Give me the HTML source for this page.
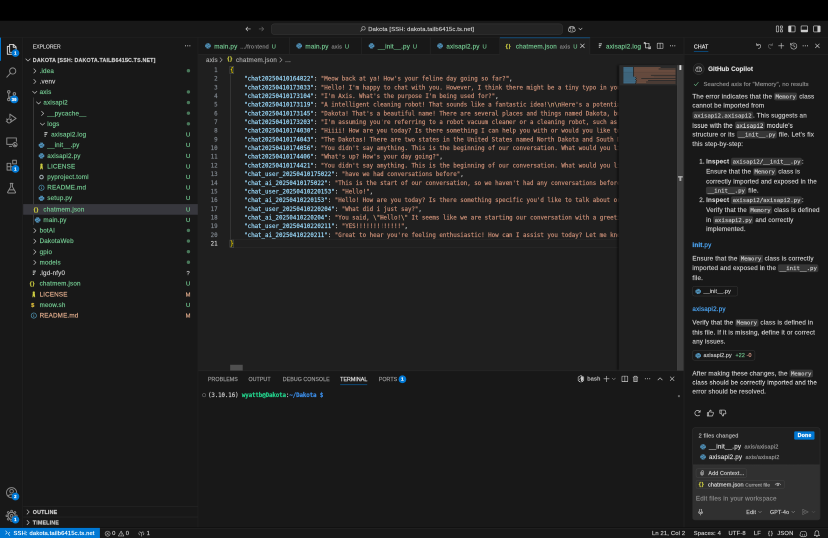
<!DOCTYPE html><html><head><meta charset="utf-8"><title>Dakota</title><style>
html,body{margin:0;padding:0;background:#000;width:828px;height:538px;overflow:hidden}
#wrap{position:absolute;left:0;top:0;width:1656px;height:1076px;transform:scale(0.5);transform-origin:0 0;will-change:transform;overflow:hidden;background:#000}
#app{position:absolute;left:0;top:0;width:1716px;height:1115px;transform:scale(0.96504);transform-origin:0 0;font-family:"Liberation Sans",sans-serif;font-size:13px;color:#ccc;background:#000;overflow:hidden;-webkit-text-stroke:0.35px;letter-spacing:.35px}
#app *{box-sizing:border-box}
.abs{position:absolute}
svg{display:block;overflow:visible}
.mono{font-family:"DejaVu Sans Mono","Liberation Mono",monospace;letter-spacing:0}
/* title */
#title{left:0;top:43px;width:1716px;height:35px;background:#181818;border-bottom:1px solid #2b2b2b}
#cc{left:562px;top:6px;width:604px;height:23px;background:#242424;border:1px solid #3a3a3a;border-radius:6px;color:#ccc;font-size:12px;line-height:21px;text-align:center}
/* activity */
#act{left:0;top:78px;width:48px;height:1015px;background:#181818;border-right:1px solid #2b2b2b}
.ai{position:absolute;left:10px;width:28px;height:28px;margin-top:-2px}
.badge{position:absolute;background:#0078d4;color:#fff;border-radius:8px;height:16px;min-width:16px;font-size:9px;line-height:16px;text-align:center;font-weight:bold;padding:0 3px}
/* sidebar */
#side{left:48px;top:78px;width:363px;height:1015px;background:#181818;border-right:1px solid #2b2b2b}
.row{position:absolute;left:0;width:362px;height:22px;line-height:22px;white-space:nowrap}
.row .lbl{position:absolute;top:0}
.row .bd{position:absolute;left:332px;width:20px;text-align:center;top:0;font-size:12px}
.g{color:#73c991}.m{color:#e2ad8d}
.dot{position:absolute;left:338.5px;top:7.5px;width:7px;height:7px;border-radius:50%;background:#73c991;opacity:.55}
.tw{position:absolute;top:3px;width:16px;height:16px}
.fi{position:absolute;top:3px;width:16px;height:16px}
/* tabs */
#tabs{left:411px;top:78px;width:1006px;height:35px;background:#181818;border-bottom:1px solid #2b2b2b}
.tab{position:absolute;top:0;height:35px;border-right:1px solid #2b2b2b;line-height:35px;white-space:nowrap}
.tab .d{color:#8b8b8b;font-size:11.5px}
/* editor */
#ed{left:411px;top:113px;width:1006px;height:655px;background:#1f1f1f}
#bc{left:0;top:0;width:1006px;height:22px;line-height:22px;color:#a9a9a9;white-space:nowrap}
#code{left:0;top:23px;width:871px;height:620px;overflow:hidden;font-size:12px;line-height:18px;white-space:pre}
.ln{position:absolute;left:0;width:40px;text-align:right;color:#6e7681;height:18px}
.cl{position:absolute;left:66px;height:18px;color:#ccc}
.k{color:#9cdcfe}.s{color:#ce9178}.e{color:#d2a07c}.y{color:#ffd700}
/* panel */
#panel{left:411px;top:768px;width:1006px;height:325px;background:#181818;border-top:1px solid #2b2b2b}
.pt{position:absolute;top:7px;height:20px;line-height:20px;font-size:11px;color:#9d9d9d;letter-spacing:.1px}
/* chat */
#chat{left:1417px;top:78px;width:299px;height:1015px;background:#181818;border-left:1px solid #2b2b2b}
.cp{position:absolute;left:17px;width:270px;line-height:19.7px;color:#ccc;white-space:nowrap}
code{font-family:"DejaVu Sans Mono","Liberation Mono",monospace;letter-spacing:0;font-size:11.7px;background:#373737;border-radius:4px;padding:1px 3px;color:#ccc}
/* status */
#status{left:0;top:1094px;width:1716px;height:21px;background:#181818;border-top:1px solid #2b2b2b;font-size:12px;line-height:21px;color:#ccc;white-space:nowrap}
.si{position:absolute;top:0;height:22px}
</style></head><body><div id="wrap"><div id="app">
<div id="title" class="abs">
<div class="abs" style="left:506px;top:9px;color:#ccc"><svg width="16" height="16" viewBox="0 0 16 16" ><path d="M13 8 H3.5 M7.5 4 L3.5 8 L7.5 12" fill="none" stroke="currentColor" stroke-width="1.25" stroke-linecap="round" stroke-linejoin="round" stroke-width="1.45"/></svg></div>
<div class="abs" style="left:534px;top:9px;color:#6b6b6b"><svg width="16" height="16" viewBox="0 0 16 16" ><path d="M3 8 H12.5 M8.5 4 L12.5 8 L8.5 12" fill="none" stroke="currentColor" stroke-width="1.25" stroke-linecap="round" stroke-linejoin="round" stroke-width="1.45"/></svg></div>
<div id="cc" class="abs"><span style="display:inline-block;vertical-align:top;margin-right:4px;margin-top:3px;color:#ccc"><svg width="14" height="14" viewBox="0 0 16 16" ><circle cx="9.5" cy="6.5" r="4" fill="none" stroke="currentColor" stroke-width="1.25" stroke-linecap="round" stroke-linejoin="round" stroke-width="1.45"/><path d="M6.5 9.5 L2.5 13.5" fill="none" stroke="currentColor" stroke-width="1.25" stroke-linecap="round" stroke-linejoin="round" stroke-width="1.45"/></svg></span>Dakota [SSH: dakota.tailb6415c.ts.net]</div>
<div class="abs" style="left:1176px;top:9px;color:#ccc"><svg width="18" height="16" viewBox="0 0 18 16" ><path d="M3 7 C3 3.5 6 3 9 3 C12 3 15 3.5 15 7 L16 9.5 V12 C14 13.8 11.5 14.5 9 14.5 C6.5 14.5 4 13.8 2 12 V9.5 Z" fill="none" stroke="currentColor" stroke-width="1.25" stroke-linecap="round" stroke-linejoin="round" stroke-width="1.5"/><path d="M7 9.5 V11.5 M11 9.5 V11.5" fill="none" stroke="currentColor" stroke-width="1.25" stroke-linecap="round" stroke-linejoin="round" stroke-width="1.5"/><path d="M4.5 4.5 H8 V7.5 H4.5 Z M10 4.5 H13.5 V7.5 H10 Z" fill="currentColor" opacity=".8"/></svg></div>
<div class="abs" style="left:1196px;top:10px;color:#ccc"><svg width="14" height="14" viewBox="0 0 16 16" ><path d="M4 6 L8 10 L12 6" fill="none" stroke="currentColor" stroke-width="1.25" stroke-linecap="round" stroke-linejoin="round" stroke-width="1.5"/></svg></div>
<div class="abs" style="left:1606px;top:8px;color:#ccc"><svg width="18" height="18" viewBox="0 0 16 16" ><rect x="2.5" y="2.5" width="4.5" height="11" rx="1" fill="none" stroke="currentColor" stroke-width="1.25" stroke-linecap="round" stroke-linejoin="round"/><rect x="10" y="2.5" width="4" height="4" rx=".8" fill="none" stroke="currentColor" stroke-width="1.25" stroke-linecap="round" stroke-linejoin="round"/><rect x="10" y="9.5" width="4" height="4" rx=".8" fill="none" stroke="currentColor" stroke-width="1.25" stroke-linecap="round" stroke-linejoin="round"/></svg></div>
<div class="abs" style="left:1632px;top:8px;color:#ccc"><svg width="18" height="18" viewBox="0 0 16 16" ><rect x="2" y="2.5" width="12" height="11" rx="1" fill="none" stroke="currentColor" stroke-width="1.25" stroke-linecap="round" stroke-linejoin="round" stroke-width="1.35"/><rect x="2" y="2.5" width="5" height="11" fill="currentColor"/></svg></div>
<div class="abs" style="left:1658px;top:8px;color:#ccc"><svg width="18" height="18" viewBox="0 0 16 16" ><rect x="2" y="2.5" width="12" height="11" rx="1" fill="none" stroke="currentColor" stroke-width="1.25" stroke-linecap="round" stroke-linejoin="round" stroke-width="1.35"/><rect x="2" y="9.5" width="12" height="4" fill="currentColor"/></svg></div>
<div class="abs" style="left:1684px;top:8px;color:#ccc"><svg width="18" height="18" viewBox="0 0 16 16" ><rect x="2" y="2.5" width="12" height="11" rx="1" fill="none" stroke="currentColor" stroke-width="1.25" stroke-linecap="round" stroke-linejoin="round" stroke-width="1.35"/><rect x="9" y="2.5" width="5" height="11" fill="currentColor"/></svg></div>
</div>
<div id="act" class="abs">
<div class="abs" style="left:0;top:0;width:2px;height:48px;background:#0078d4"></div>
<div class="ai" style="top:12px;color:#d7d7d7"><svg width="28" height="28" viewBox="0 0 24 24" ><path d="M8.5 3.5 H15.5 L20 8 V17.5 H8.5 Z M15 3.5 V8.5 H20" fill="none" stroke="currentColor" stroke-width="1.7" stroke-linecap="round" stroke-linejoin="round"/><path d="M8.5 7 H4.5 V21 H15 V17.5" fill="none" stroke="currentColor" stroke-width="1.7" stroke-linecap="round" stroke-linejoin="round"/></svg></div>
<div class="ai" style="top:60px;color:#8c8c8c"><svg width="28" height="28" viewBox="0 0 24 24" ><circle cx="14" cy="9.5" r="5.5" fill="none" stroke="currentColor" stroke-width="1.7" stroke-linecap="round" stroke-linejoin="round"/><path d="M10 13.5 L3.5 20.5" fill="none" stroke="currentColor" stroke-width="1.7" stroke-linecap="round" stroke-linejoin="round"/></svg></div>
<div class="ai" style="top:108px;color:#8c8c8c"><svg width="28" height="28" viewBox="0 0 24 24" ><circle cx="7" cy="5.5" r="2.2" fill="none" stroke="currentColor" stroke-width="1.7" stroke-linecap="round" stroke-linejoin="round"/><circle cx="7" cy="19" r="2.2" fill="none" stroke="currentColor" stroke-width="1.7" stroke-linecap="round" stroke-linejoin="round"/><circle cx="17" cy="9" r="2.2" fill="none" stroke="currentColor" stroke-width="1.7" stroke-linecap="round" stroke-linejoin="round"/><path d="M7 7.7 V16.8 M17 11.2 C17 14.5 7 13 7 16.8" fill="none" stroke="currentColor" stroke-width="1.7" stroke-linecap="round" stroke-linejoin="round"/></svg></div>
<div class="ai" style="top:156px;color:#8c8c8c"><svg width="28" height="28" viewBox="0 0 24 24" ><path d="M9 4 L20 11.5 L10.5 18" fill="none" stroke="currentColor" stroke-width="1.7" stroke-linecap="round" stroke-linejoin="round"/><path d="M9 4 V10" fill="none" stroke="currentColor" stroke-width="1.7" stroke-linecap="round" stroke-linejoin="round"/><circle cx="7.5" cy="16" r="3.6" fill="none" stroke="currentColor" stroke-width="1.7" stroke-linecap="round" stroke-linejoin="round"/><path d="M3 12.5 L5 13.8 M12 12.5 L10 13.8 M2.5 16.5 H4 M11 16.5 H12.5" fill="none" stroke="currentColor" stroke-width="1.7" stroke-linecap="round" stroke-linejoin="round" stroke-width="1.45"/></svg></div>
<div class="ai" style="top:204px;color:#8c8c8c"><svg width="28" height="28" viewBox="0 0 24 24" ><path d="M13 16.5 H3.5 V5 H20.5 V11" fill="none" stroke="currentColor" stroke-width="1.7" stroke-linecap="round" stroke-linejoin="round"/><path d="M8 20 H12" fill="none" stroke="currentColor" stroke-width="1.7" stroke-linecap="round" stroke-linejoin="round"/><circle cx="18" cy="17" r="3.8" fill="none" stroke="currentColor" stroke-width="1.7" stroke-linecap="round" stroke-linejoin="round"/><path d="M16.5 15.5 L18 17 L16.5 18.5 M18.5 18.5 H19.8" fill="none" stroke="currentColor" stroke-width="1.7" stroke-linecap="round" stroke-linejoin="round" stroke-width="1.35"/></svg></div>
<div class="ai" style="top:252px;color:#8c8c8c"><svg width="28" height="28" viewBox="0 0 24 24" ><path d="M4 9 H10.5 V21 H4 Z M10.5 15 H17 V21 H10.5 M4 15 H10.5" fill="none" stroke="currentColor" stroke-width="1.7" stroke-linecap="round" stroke-linejoin="round"/><path d="M14 3.5 H20.5 V10 H14 Z" fill="none" stroke="currentColor" stroke-width="1.7" stroke-linecap="round" stroke-linejoin="round"/></svg></div>
<div class="ai" style="top:300px;color:#8c8c8c"><svg width="28" height="28" viewBox="0 0 24 24" ><path d="M9.5 3.5 H14.5 M10.5 3.5 V9.5 L5 19 C4.6 20 5 20.5 6 20.5 H18 C19 20.5 19.4 20 19 19 L13.5 9.5 V3.5 M7.5 15 H16.5" fill="none" stroke="currentColor" stroke-width="1.7" stroke-linecap="round" stroke-linejoin="round"/></svg></div>
<div class="ai" style="top:931px;color:#868686"><svg width="28" height="28" viewBox="0 0 24 24" ><circle cx="12" cy="12" r="9" fill="none" stroke="currentColor" stroke-width="1.7" stroke-linecap="round" stroke-linejoin="round"/><circle cx="12" cy="9.5" r="3.2" fill="none" stroke="currentColor" stroke-width="1.7" stroke-linecap="round" stroke-linejoin="round"/><path d="M5.8 18.5 C7 14.5 17 14.5 18.2 18.5" fill="none" stroke="currentColor" stroke-width="1.7" stroke-linecap="round" stroke-linejoin="round"/></svg></div>
<div class="ai" style="top:979px;color:#868686"><svg width="28" height="28" viewBox="0 0 24 24" ><circle cx="12" cy="12" r="6.4" fill="none" stroke="currentColor" stroke-width="1.7" stroke-linecap="round" stroke-linejoin="round"/><circle cx="12" cy="12" r="2.4" fill="none" stroke="currentColor" stroke-width="1.7" stroke-linecap="round" stroke-linejoin="round"/><rect x="10.6" y="2.2" width="2.8" height="4" rx=".6" transform="rotate(0 12 12)" fill="none" stroke="currentColor" stroke-width="1.5"/><rect x="10.6" y="2.2" width="2.8" height="4" rx=".6" transform="rotate(45 12 12)" fill="none" stroke="currentColor" stroke-width="1.5"/><rect x="10.6" y="2.2" width="2.8" height="4" rx=".6" transform="rotate(90 12 12)" fill="none" stroke="currentColor" stroke-width="1.5"/><rect x="10.6" y="2.2" width="2.8" height="4" rx=".6" transform="rotate(135 12 12)" fill="none" stroke="currentColor" stroke-width="1.5"/><rect x="10.6" y="2.2" width="2.8" height="4" rx=".6" transform="rotate(180 12 12)" fill="none" stroke="currentColor" stroke-width="1.5"/><rect x="10.6" y="2.2" width="2.8" height="4" rx=".6" transform="rotate(225 12 12)" fill="none" stroke="currentColor" stroke-width="1.5"/><rect x="10.6" y="2.2" width="2.8" height="4" rx=".6" transform="rotate(270 12 12)" fill="none" stroke="currentColor" stroke-width="1.5"/><rect x="10.6" y="2.2" width="2.8" height="4" rx=".6" transform="rotate(315 12 12)" fill="none" stroke="currentColor" stroke-width="1.5"/></svg></div>
<div class="badge" style="left:24px;top:24px">1</div>
<div class="badge" style="left:21px;top:120px">39</div>
<div class="badge" style="left:24px;top:264px">1</div>
<div class="badge" style="left:24px;top:943px">2</div>
<div class="badge" style="left:24px;top:991px">1</div>
</div>
<div id="side" class="abs">
<div class="abs" style="left:20px;top:0;height:35px;line-height:37px;font-size:10.6px;color:#ccc;letter-spacing:0">EXPLORER</div>
<div class="abs" style="left:333px;top:9px;color:#ccc"><svg width="16" height="16" viewBox="0 0 16 16" ><circle cx="3.5" cy="8" r="1.1" fill="currentColor"/><circle cx="8" cy="8" r="1.1" fill="currentColor"/><circle cx="12.5" cy="8" r="1.1" fill="currentColor"/></svg></div>
<div class="row" style="top:35px;font-weight:bold;font-size:11px;color:#ccc"><span class="tw" style="left:2px;color:#ccc"><svg width="16" height="16" viewBox="0 0 16 16" ><path d="M3.5 6 L8 10.5 L12.5 6" fill="none" stroke="currentColor" stroke-width="1.25" stroke-linecap="round" stroke-linejoin="round" stroke-width="1.45"/></svg></span><span class="lbl" style="left:20px">DAKOTA [SSH: DAKOTA.TAILB6415C.TS.NET]</span></div>
<div class="abs" style="left:21px;top:123.5px;width:1px;height:264px;background:#585858"></div>
<div class="row g" style="top:57.5px;"><span class="tw" style="left:16px;color:#c5c5c5"><svg width="16" height="16" viewBox="0 0 16 16" ><path d="M6 3.5 L10.5 8 L6 12.5" fill="none" stroke="currentColor" stroke-width="1.25" stroke-linecap="round" stroke-linejoin="round" stroke-width="1.45"/></svg></span><span class="lbl" style="left:34px">.idea</span><span class="dot"></span></div>
<div class="row " style="top:79.58px;"><span class="tw" style="left:16px;color:#c5c5c5"><svg width="16" height="16" viewBox="0 0 16 16" ><path d="M6 3.5 L10.5 8 L6 12.5" fill="none" stroke="currentColor" stroke-width="1.25" stroke-linecap="round" stroke-linejoin="round" stroke-width="1.45"/></svg></span><span class="lbl" style="left:34px">.venv</span></div>
<div class="row g" style="top:101.66px;"><span class="tw" style="left:16px;color:#c5c5c5"><svg width="16" height="16" viewBox="0 0 16 16" ><path d="M3.5 6 L8 10.5 L12.5 6" fill="none" stroke="currentColor" stroke-width="1.25" stroke-linecap="round" stroke-linejoin="round" stroke-width="1.45"/></svg></span><span class="lbl" style="left:34px">axis</span><span class="dot"></span></div>
<div class="row g" style="top:123.74px;"><span class="tw" style="left:24px;color:#c5c5c5"><svg width="16" height="16" viewBox="0 0 16 16" ><path d="M3.5 6 L8 10.5 L12.5 6" fill="none" stroke="currentColor" stroke-width="1.25" stroke-linecap="round" stroke-linejoin="round" stroke-width="1.45"/></svg></span><span class="lbl" style="left:42px">axisapi2</span><span class="dot"></span></div>
<div class="row g" style="top:145.82px;"><span class="tw" style="left:32px;color:#c5c5c5"><svg width="16" height="16" viewBox="0 0 16 16" ><path d="M6 3.5 L10.5 8 L6 12.5" fill="none" stroke="currentColor" stroke-width="1.25" stroke-linecap="round" stroke-linejoin="round" stroke-width="1.45"/></svg></span><span class="lbl" style="left:50px">__pycache__</span><span class="dot"></span></div>
<div class="row g" style="top:167.9px;"><span class="tw" style="left:32px;color:#c5c5c5"><svg width="16" height="16" viewBox="0 0 16 16" ><path d="M3.5 6 L8 10.5 L12.5 6" fill="none" stroke="currentColor" stroke-width="1.25" stroke-linecap="round" stroke-linejoin="round" stroke-width="1.45"/></svg></span><span class="lbl" style="left:50px">logs</span><span class="dot"></span></div>
<div class="row g" style="top:189.98px;"><span class="fi" style="left:37.5px"><svg width="16" height="16" viewBox="0 0 16 16" ><path d="M6 4 H12.5 M6 7.5 H11 M6 11 H9" stroke="#c5c8c6" stroke-width="2.1"/></svg></span><span class="lbl" style="left:58px">axisapi2.log</span><span class="bd">U</span></div>
<div class="row g" style="top:212.06px;"><span class="fi" style="left:29.5px"><svg width="16" height="16" viewBox="0 0 16 16" ><path d="M6 2.6 h4 a1.2 1.2 0 0 1 1.2 1.2 v1.4 h1.4 a1.2 1.2 0 0 1 1.2 1.2 v3.2 a1.2 1.2 0 0 1 -1.2 1.2 h-1.4 v1.4 a1.2 1.2 0 0 1 -1.2 1.2 h-4 a1.2 1.2 0 0 1 -1.2 -1.2 v-1.4 h-1.4 a1.2 1.2 0 0 1 -1.2 -1.2 v-3.2 a1.2 1.2 0 0 1 1.2 -1.2 h1.4 v-1.4 a1.2 1.2 0 0 1 1.2 -1.2 z" fill="#4f8fb6"/><circle cx="6.6" cy="4.4" r=".7" fill="#181818"/><circle cx="9.4" cy="11.6" r=".7" fill="#181818"/><path d="M4.8 8.6 H8.2 Q9 8.6 9 7.8 V7.4 H11.2" fill="none" stroke="#1c1c1c" stroke-width=".7"/></svg></span><span class="lbl" style="left:50px">__init__.py</span><span class="bd">U</span></div>
<div class="row g" style="top:234.14px;"><span class="fi" style="left:29.5px"><svg width="16" height="16" viewBox="0 0 16 16" ><path d="M6 2.6 h4 a1.2 1.2 0 0 1 1.2 1.2 v1.4 h1.4 a1.2 1.2 0 0 1 1.2 1.2 v3.2 a1.2 1.2 0 0 1 -1.2 1.2 h-1.4 v1.4 a1.2 1.2 0 0 1 -1.2 1.2 h-4 a1.2 1.2 0 0 1 -1.2 -1.2 v-1.4 h-1.4 a1.2 1.2 0 0 1 -1.2 -1.2 v-3.2 a1.2 1.2 0 0 1 1.2 -1.2 h1.4 v-1.4 a1.2 1.2 0 0 1 1.2 -1.2 z" fill="#4f8fb6"/><circle cx="6.6" cy="4.4" r=".7" fill="#181818"/><circle cx="9.4" cy="11.6" r=".7" fill="#181818"/><path d="M4.8 8.6 H8.2 Q9 8.6 9 7.8 V7.4 H11.2" fill="none" stroke="#1c1c1c" stroke-width=".7"/></svg></span><span class="lbl" style="left:50px">axisapi2.py</span><span class="bd">U</span></div>
<div class="row g" style="top:256.22px;"><span class="fi" style="left:29.5px"><svg width="16" height="16" viewBox="0 0 16 16" ><circle cx="8" cy="4.3" r="2.4" fill="#cbcb41"/><path d="M5.8 6 H10.2 L10.9 14 H9.2 L8 10.8 L6.8 14 H5.1 Z" fill="#cbcb41"/></svg></span><span class="lbl" style="left:50px">LICENSE</span><span class="bd">U</span></div>
<div class="row g" style="top:278.3px;"><span class="fi" style="left:29.5px"><svg width="16" height="16" viewBox="0 0 16 16" ><circle cx="8" cy="8" r="3.6" fill="none" stroke="#9aa5aa" stroke-width="2.4"/></svg></span><span class="lbl" style="left:50px">pyproject.toml</span><span class="bd">U</span></div>
<div class="row g" style="top:300.38px;"><span class="fi" style="left:29.5px"><svg width="16" height="16" viewBox="0 0 16 16" ><circle cx="8" cy="8" r="5.4" fill="none" stroke="#519aba" stroke-width="1.35"/><path d="M8 7.2 V11" stroke="#519aba" stroke-width="1.5"/><circle cx="8" cy="5.2" r=".8" fill="#519aba"/></svg></span><span class="lbl" style="left:50px">README.md</span><span class="bd">U</span></div>
<div class="row g" style="top:322.46px;"><span class="fi" style="left:29.5px"><svg width="16" height="16" viewBox="0 0 16 16" ><path d="M6 2.6 h4 a1.2 1.2 0 0 1 1.2 1.2 v1.4 h1.4 a1.2 1.2 0 0 1 1.2 1.2 v3.2 a1.2 1.2 0 0 1 -1.2 1.2 h-1.4 v1.4 a1.2 1.2 0 0 1 -1.2 1.2 h-4 a1.2 1.2 0 0 1 -1.2 -1.2 v-1.4 h-1.4 a1.2 1.2 0 0 1 -1.2 -1.2 v-3.2 a1.2 1.2 0 0 1 1.2 -1.2 h1.4 v-1.4 a1.2 1.2 0 0 1 1.2 -1.2 z" fill="#4f8fb6"/><circle cx="6.6" cy="4.4" r=".7" fill="#181818"/><circle cx="9.4" cy="11.6" r=".7" fill="#181818"/><path d="M4.8 8.6 H8.2 Q9 8.6 9 7.8 V7.4 H11.2" fill="none" stroke="#1c1c1c" stroke-width=".7"/></svg></span><span class="lbl" style="left:50px">setup.py</span><span class="bd">U</span></div>
<div class="row g" style="top:344.54px; background:#37373d;"><span class="fi" style="left:21.5px"><span style="position:absolute;left:0;top:-3px;font-size:12px;font-weight:bold;color:#cbcb41;letter-spacing:1px;line-height:22px">{}</span></span><span class="lbl" style="left:42px">chatmem.json</span><span class="bd">U</span></div>
<div class="row g" style="top:366.62px;"><span class="fi" style="left:21.5px"><svg width="16" height="16" viewBox="0 0 16 16" ><path d="M6 2.6 h4 a1.2 1.2 0 0 1 1.2 1.2 v1.4 h1.4 a1.2 1.2 0 0 1 1.2 1.2 v3.2 a1.2 1.2 0 0 1 -1.2 1.2 h-1.4 v1.4 a1.2 1.2 0 0 1 -1.2 1.2 h-4 a1.2 1.2 0 0 1 -1.2 -1.2 v-1.4 h-1.4 a1.2 1.2 0 0 1 -1.2 -1.2 v-3.2 a1.2 1.2 0 0 1 1.2 -1.2 h1.4 v-1.4 a1.2 1.2 0 0 1 1.2 -1.2 z" fill="#4f8fb6"/><circle cx="6.6" cy="4.4" r=".7" fill="#181818"/><circle cx="9.4" cy="11.6" r=".7" fill="#181818"/><path d="M4.8 8.6 H8.2 Q9 8.6 9 7.8 V7.4 H11.2" fill="none" stroke="#1c1c1c" stroke-width=".7"/></svg></span><span class="lbl" style="left:42px">main.py</span><span class="bd">U</span></div>
<div class="row g" style="top:388.7px;"><span class="tw" style="left:16px;color:#c5c5c5"><svg width="16" height="16" viewBox="0 0 16 16" ><path d="M6 3.5 L10.5 8 L6 12.5" fill="none" stroke="currentColor" stroke-width="1.25" stroke-linecap="round" stroke-linejoin="round" stroke-width="1.45"/></svg></span><span class="lbl" style="left:34px">botAI</span><span class="dot"></span></div>
<div class="row g" style="top:410.78px;"><span class="tw" style="left:16px;color:#c5c5c5"><svg width="16" height="16" viewBox="0 0 16 16" ><path d="M6 3.5 L10.5 8 L6 12.5" fill="none" stroke="currentColor" stroke-width="1.25" stroke-linecap="round" stroke-linejoin="round" stroke-width="1.45"/></svg></span><span class="lbl" style="left:34px">DakotaWeb</span><span class="dot"></span></div>
<div class="row g" style="top:432.86px;"><span class="tw" style="left:16px;color:#c5c5c5"><svg width="16" height="16" viewBox="0 0 16 16" ><path d="M6 3.5 L10.5 8 L6 12.5" fill="none" stroke="currentColor" stroke-width="1.25" stroke-linecap="round" stroke-linejoin="round" stroke-width="1.45"/></svg></span><span class="lbl" style="left:34px">gpio</span><span class="dot"></span></div>
<div class="row g" style="top:454.94px;"><span class="tw" style="left:16px;color:#c5c5c5"><svg width="16" height="16" viewBox="0 0 16 16" ><path d="M6 3.5 L10.5 8 L6 12.5" fill="none" stroke="currentColor" stroke-width="1.25" stroke-linecap="round" stroke-linejoin="round" stroke-width="1.45"/></svg></span><span class="lbl" style="left:34px">models</span><span class="dot"></span></div>
<div class="row " style="top:477.02px;"><span class="fi" style="left:13.5px"><svg width="16" height="16" viewBox="0 0 16 16" ><path d="M6 4 H12.5 M6 7.5 H11 M6 11 H9" stroke="#c5c8c6" stroke-width="2.1"/></svg></span><span class="lbl" style="left:34px">.lgd-nfy0</span><span class="bd">?</span></div>
<div class="row g" style="top:499.1px;"><span class="fi" style="left:13.5px"><span style="position:absolute;left:0;top:-3px;font-size:12px;font-weight:bold;color:#cbcb41;letter-spacing:1px;line-height:22px">{}</span></span><span class="lbl" style="left:34px">chatmem.json</span><span class="bd">U</span></div>
<div class="row m" style="top:521.18px;"><span class="fi" style="left:13.5px"><svg width="16" height="16" viewBox="0 0 16 16" ><circle cx="8" cy="4.3" r="2.4" fill="#cbcb41"/><path d="M5.8 6 H10.2 L10.9 14 H9.2 L8 10.8 L6.8 14 H5.1 Z" fill="#cbcb41"/></svg></span><span class="lbl" style="left:34px">LICENSE</span><span class="bd">M</span></div>
<div class="row g" style="top:543.26px;"><span class="fi" style="left:13.5px"><span style="position:absolute;left:3px;top:-3px;font-size:12px;font-weight:bold;color:#d8b93a;line-height:22px">$</span></span><span class="lbl" style="left:34px">meow.sh</span><span class="bd">U</span></div>
<div class="row m" style="top:565.34px;"><span class="fi" style="left:13.5px"><svg width="16" height="16" viewBox="0 0 16 16" ><circle cx="8" cy="8" r="5.4" fill="none" stroke="#519aba" stroke-width="1.35"/><path d="M8 7.2 V11" stroke="#519aba" stroke-width="1.5"/><circle cx="8" cy="5.2" r=".8" fill="#519aba"/></svg></span><span class="lbl" style="left:34px">README.md</span><span class="bd">M</span></div>
<div class="row" style="top:971px;border-top:1px solid #2b2b2b;font-weight:bold;font-size:11px;color:#ccc"><span class="tw" style="left:2px;color:#ccc"><svg width="16" height="16" viewBox="0 0 16 16" ><path d="M6 3.5 L10.5 8 L6 12.5" fill="none" stroke="currentColor" stroke-width="1.25" stroke-linecap="round" stroke-linejoin="round" stroke-width="1.45"/></svg></span><span class="lbl" style="left:20px">OUTLINE</span></div>
<div class="row" style="top:993px;border-top:1px solid #2b2b2b;font-weight:bold;font-size:11px;color:#ccc"><span class="tw" style="left:2px;color:#ccc"><svg width="16" height="16" viewBox="0 0 16 16" ><path d="M6 3.5 L10.5 8 L6 12.5" fill="none" stroke="currentColor" stroke-width="1.25" stroke-linecap="round" stroke-linejoin="round" stroke-width="1.45"/></svg></span><span class="lbl" style="left:20px">TIMELINE</span></div>
</div>
<div id="tabs" class="abs">
<div class="tab" style="left:0px;width:189px;"><span class="abs" style="left:12px;top:9px;width:16px;height:16px"><svg width="16" height="16" viewBox="0 0 16 16" ><path d="M6 2.6 h4 a1.2 1.2 0 0 1 1.2 1.2 v1.4 h1.4 a1.2 1.2 0 0 1 1.2 1.2 v3.2 a1.2 1.2 0 0 1 -1.2 1.2 h-1.4 v1.4 a1.2 1.2 0 0 1 -1.2 1.2 h-4 a1.2 1.2 0 0 1 -1.2 -1.2 v-1.4 h-1.4 a1.2 1.2 0 0 1 -1.2 -1.2 v-3.2 a1.2 1.2 0 0 1 1.2 -1.2 h1.4 v-1.4 a1.2 1.2 0 0 1 1.2 -1.2 z" fill="#4f8fb6"/><circle cx="6.6" cy="4.4" r=".7" fill="#181818"/><circle cx="9.4" cy="11.6" r=".7" fill="#181818"/><path d="M4.8 8.6 H8.2 Q9 8.6 9 7.8 V7.4 H11.2" fill="none" stroke="#1c1c1c" stroke-width=".7"/></svg></span><span class="abs g" style="left:33px">main.py<span class="d" style="margin-left:6px">.../frontend</span><span style="margin-left:6px;font-size:12px;opacity:.9">U</span></span></div>
<div class="tab" style="left:189px;width:150px;"><span class="abs" style="left:12px;top:9px;width:16px;height:16px"><svg width="16" height="16" viewBox="0 0 16 16" ><path d="M6 2.6 h4 a1.2 1.2 0 0 1 1.2 1.2 v1.4 h1.4 a1.2 1.2 0 0 1 1.2 1.2 v3.2 a1.2 1.2 0 0 1 -1.2 1.2 h-1.4 v1.4 a1.2 1.2 0 0 1 -1.2 1.2 h-4 a1.2 1.2 0 0 1 -1.2 -1.2 v-1.4 h-1.4 a1.2 1.2 0 0 1 -1.2 -1.2 v-3.2 a1.2 1.2 0 0 1 1.2 -1.2 h1.4 v-1.4 a1.2 1.2 0 0 1 1.2 -1.2 z" fill="#4f8fb6"/><circle cx="6.6" cy="4.4" r=".7" fill="#181818"/><circle cx="9.4" cy="11.6" r=".7" fill="#181818"/><path d="M4.8 8.6 H8.2 Q9 8.6 9 7.8 V7.4 H11.2" fill="none" stroke="#1c1c1c" stroke-width=".7"/></svg></span><span class="abs g" style="left:33px">main.py<span class="d" style="margin-left:6px">axis</span><span style="margin-left:6px;font-size:12px;opacity:.9">U</span></span></div>
<div class="tab" style="left:339px;width:142px;"><span class="abs" style="left:12px;top:9px;width:16px;height:16px"><svg width="16" height="16" viewBox="0 0 16 16" ><path d="M6 2.6 h4 a1.2 1.2 0 0 1 1.2 1.2 v1.4 h1.4 a1.2 1.2 0 0 1 1.2 1.2 v3.2 a1.2 1.2 0 0 1 -1.2 1.2 h-1.4 v1.4 a1.2 1.2 0 0 1 -1.2 1.2 h-4 a1.2 1.2 0 0 1 -1.2 -1.2 v-1.4 h-1.4 a1.2 1.2 0 0 1 -1.2 -1.2 v-3.2 a1.2 1.2 0 0 1 1.2 -1.2 h1.4 v-1.4 a1.2 1.2 0 0 1 1.2 -1.2 z" fill="#4f8fb6"/><circle cx="6.6" cy="4.4" r=".7" fill="#181818"/><circle cx="9.4" cy="11.6" r=".7" fill="#181818"/><path d="M4.8 8.6 H8.2 Q9 8.6 9 7.8 V7.4 H11.2" fill="none" stroke="#1c1c1c" stroke-width=".7"/></svg></span><span class="abs g" style="left:33px">__init__.py<span style="margin-left:6px;font-size:12px;opacity:.9">U</span></span></div>
<div class="tab" style="left:481px;width:144px;"><span class="abs" style="left:12px;top:9px;width:16px;height:16px"><svg width="16" height="16" viewBox="0 0 16 16" ><path d="M6 2.6 h4 a1.2 1.2 0 0 1 1.2 1.2 v1.4 h1.4 a1.2 1.2 0 0 1 1.2 1.2 v3.2 a1.2 1.2 0 0 1 -1.2 1.2 h-1.4 v1.4 a1.2 1.2 0 0 1 -1.2 1.2 h-4 a1.2 1.2 0 0 1 -1.2 -1.2 v-1.4 h-1.4 a1.2 1.2 0 0 1 -1.2 -1.2 v-3.2 a1.2 1.2 0 0 1 1.2 -1.2 h1.4 v-1.4 a1.2 1.2 0 0 1 1.2 -1.2 z" fill="#4f8fb6"/><circle cx="6.6" cy="4.4" r=".7" fill="#181818"/><circle cx="9.4" cy="11.6" r=".7" fill="#181818"/><path d="M4.8 8.6 H8.2 Q9 8.6 9 7.8 V7.4 H11.2" fill="none" stroke="#1c1c1c" stroke-width=".7"/></svg></span><span class="abs g" style="left:33px">axisapi2.py<span style="margin-left:6px;font-size:12px;opacity:.9">U</span></span></div>
<div class="tab" style="left:625px;width:187px;background:#1f1f1f;border-top:1px solid #0078d4;height:36px;line-height:33px;"><span class="abs" style="left:12px;top:8px;width:16px;height:16px"><span style="position:absolute;left:0;top:-3px;font-size:12px;font-weight:bold;color:#cbcb41;letter-spacing:1px;line-height:22px">{}</span></span><span class="abs g" style="left:33px">chatmem.json<span class="d" style="margin-left:6px">axis</span><span style="margin-left:6px;font-size:12px;opacity:.9">U</span></span><span class="abs" style="left:163px;top:8px;color:#ddd"><svg width="16" height="16" viewBox="0 0 16 16" ><path d="M4 4 L12 12 M12 4 L4 12" fill="none" stroke="currentColor" stroke-width="1.25" stroke-linecap="round" stroke-linejoin="round" stroke-width="1.5"/></svg></span></div>
<div class="tab" style="left:812px;width:120px;"><span class="abs" style="left:12px;top:9px;width:16px;height:16px"><svg width="16" height="16" viewBox="0 0 16 16" ><path d="M6 4 H12.5 M6 7.5 H11 M6 11 H9" stroke="#c5c8c6" stroke-width="2.1"/></svg></span><span class="abs g" style="left:33px">axisapi2.log</span></div>
<div class="abs" style="left:918px;top:0;width:88px;height:34px;background:#181818"></div>
<div class="abs" style="left:921px;top:7px;color:#ccc"><svg width="19" height="19" viewBox="0 0 16 16" ><path d="M2.5 5 V2.5 H5 M2.5 2.5 L5.5 5.5" fill="none" stroke="currentColor" stroke-width="1.25" stroke-linecap="round" stroke-linejoin="round"/><rect x="5" y="4" width="6" height="8" fill="none" stroke="currentColor" stroke-width="1.25" stroke-linecap="round" stroke-linejoin="round"/><path d="M13.5 9.5 V13.5 H10 M13.5 13.5 L11 11" fill="none" stroke="currentColor" stroke-width="1.25" stroke-linecap="round" stroke-linejoin="round"/></svg></div>
<div class="abs" style="left:949px;top:9px;color:#ccc"><svg width="16" height="16" viewBox="0 0 16 16" ><rect x="2" y="2.5" width="12" height="11" rx="1" fill="none" stroke="currentColor" stroke-width="1.25" stroke-linecap="round" stroke-linejoin="round" stroke-width="1.45"/><path d="M8 2.5 V13.5" fill="none" stroke="currentColor" stroke-width="1.25" stroke-linecap="round" stroke-linejoin="round" stroke-width="1.45"/></svg></div>
<div class="abs" style="left:975px;top:9px;color:#ccc"><svg width="16" height="16" viewBox="0 0 16 16" ><circle cx="3.5" cy="8" r="1.1" fill="currentColor"/><circle cx="8" cy="8" r="1.1" fill="currentColor"/><circle cx="12.5" cy="8" r="1.1" fill="currentColor"/></svg></div>
</div>
<div id="ed" class="abs">
<div id="bc" class="abs"><span class="abs" style="left:16px">axis</span><span class="abs" style="left:39px;top:3px;color:#a9a9a9"><svg width="16" height="16" viewBox="0 0 16 16" ><path d="M6 3.5 L10.5 8 L6 12.5" fill="none" stroke="currentColor" stroke-width="1.25" stroke-linecap="round" stroke-linejoin="round" stroke-width="1.45"/></svg></span><span class="abs" style="left:60px;top:0;width:16px;height:22px"><span style="position:absolute;left:0;top:-3px;font-size:12px;font-weight:bold;color:#cbcb41;letter-spacing:1px;line-height:22px">{}</span></span><span class="abs" style="left:78px">chatmem.json</span><span class="abs" style="left:163px;top:3px;color:#a9a9a9"><svg width="16" height="16" viewBox="0 0 16 16" ><path d="M6 3.5 L10.5 8 L6 12.5" fill="none" stroke="currentColor" stroke-width="1.25" stroke-linecap="round" stroke-linejoin="round" stroke-width="1.45"/></svg></span><span class="abs" style="left:180px">...</span></div>
<div id="code" class="abs mono">
<div class="abs" style="left:66px;top:360px;width:810px;height:18px;border:1px solid #2c2c2c"></div>
<div class="abs" style="left:66px;top:18px;width:1px;height:342px;background:#4a4a4a"></div>
<div class="ln" style="top:0px;color:#7f868e">1</div><div class="cl" style="top:0px"><span class="y" style="outline:1px solid #5a5a5a;background:#0064001a">{</span></div>
<div class="ln" style="top:18px;color:#7f868e">2</div><div class="cl" style="top:18px">    <span class="k">"chat20250410164822"</span>: <span class="s">"Meow back at ya! How's your feline day going so far?"</span>,</div>
<div class="ln" style="top:36px;color:#7f868e">3</div><div class="cl" style="top:36px">    <span class="k">"chat20250410173033"</span>: <span class="s">"Hello! I'm happy to chat with you. However, I think there might be a tiny typo in your message. Did you mean to say something else?</span></div>
<div class="ln" style="top:54px;color:#7f868e">4</div><div class="cl" style="top:54px">    <span class="k">"chat20250410173104"</span>: <span class="s">"I'm Axis. What's the purpose I'm being used for?"</span>,</div>
<div class="ln" style="top:72px;color:#7f868e">5</div><div class="cl" style="top:72px">    <span class="k">"chat20250410173119"</span>: <span class="s">"A intelligent cleaning robot! That sounds like a fantastic idea!<span class="e">\n</span><span class="e">\n</span>Here's a potential concept for the robot and its features</span></div>
<div class="ln" style="top:90px;color:#7f868e">6</div><div class="cl" style="top:90px">    <span class="k">"chat20250410173145"</span>: <span class="s">"Dakota! That's a beautiful name! There are several places and things named Dakota, but I'm assuming you mean the robot</span></div>
<div class="ln" style="top:108px;color:#7f868e">7</div><div class="cl" style="top:108px">    <span class="k">"chat20250410173203"</span>: <span class="s">"I'm assuming you're referring to a robot vacuum cleaner or a cleaning robot, such as a Roomba or a similar device made</span></div>
<div class="ln" style="top:126px;color:#7f868e">8</div><div class="cl" style="top:126px">    <span class="k">"chat20250410174030"</span>: <span class="s">"Hiiii! How are you today? Is there something I can help you with or would you like to chat about something specific?</span></div>
<div class="ln" style="top:144px;color:#7f868e">9</div><div class="cl" style="top:144px">    <span class="k">"chat20250410174043"</span>: <span class="s">"The Dakotas! There are two states in the United States named North Dakota and South Dakota, both located in the Midwest</span></div>
<div class="ln" style="top:162px;color:#7f868e">10</div><div class="cl" style="top:162px">    <span class="k">"chat20250410174056"</span>: <span class="s">"You didn't say anything. This is the beginning of our conversation. What would you like to talk about? I can help</span></div>
<div class="ln" style="top:180px;color:#7f868e">11</div><div class="cl" style="top:180px">    <span class="k">"chat20250410174406"</span>: <span class="s">"What's up? How's your day going?"</span>,</div>
<div class="ln" style="top:198px;color:#7f868e">12</div><div class="cl" style="top:198px">    <span class="k">"chat20250410174421"</span>: <span class="s">"You didn't say anything. This is the beginning of our conversation. What would you like to talk about? I can help</span></div>
<div class="ln" style="top:216px;color:#7f868e">13</div><div class="cl" style="top:216px">    <span class="k">"chat_user_20250410175022"</span>: <span class="s">"have we had conversations before"</span>,</div>
<div class="ln" style="top:234px;color:#7f868e">14</div><div class="cl" style="top:234px">    <span class="k">"chat_ai_20250410175022"</span>: <span class="s">"This is the start of our conversation, so we haven't had any conversations before. I am happy to chat with you now</span></div>
<div class="ln" style="top:252px;color:#7f868e">15</div><div class="cl" style="top:252px">    <span class="k">"chat_user_20250410220153"</span>: <span class="s">"Hello!"</span>,</div>
<div class="ln" style="top:270px;color:#7f868e">16</div><div class="cl" style="top:270px">    <span class="k">"chat_ai_20250410220153"</span>: <span class="s">"Hello! How are you today? Is there something specific you'd like to talk about or any questions you have for me today</span></div>
<div class="ln" style="top:288px;color:#7f868e">17</div><div class="cl" style="top:288px">    <span class="k">"chat_user_20250410220204"</span>: <span class="s">"What did i just say?"</span>,</div>
<div class="ln" style="top:306px;color:#7f868e">18</div><div class="cl" style="top:306px">    <span class="k">"chat_ai_20250410220204"</span>: <span class="s">"You said, <span class="e">\"</span>Hello!<span class="e">\"</span> It seems like we are starting our conversation with a greeting. How can I help you today my friend</span></div>
<div class="ln" style="top:324px;color:#7f868e">19</div><div class="cl" style="top:324px">    <span class="k">"chat_user_20250410220211"</span>: <span class="s">"YES!!!!!!!!!!!!!"</span>,</div>
<div class="ln" style="top:342px;color:#7f868e">20</div><div class="cl" style="top:342px">    <span class="k">"chat_ai_20250410220211"</span>: <span class="s">"Great to hear you're feeling enthusiastic! How can I assist you today? Let me know what is on your mind right now</span></div>
<div class="ln" style="top:360px;color:#ccc">21</div><div class="cl" style="top:360px"><span class="y" style="outline:1px solid #5a5a5a;background:#0064001a">}</span></div>
</div>
<div class="abs" style="left:871px;top:22px;width:121px;height:633px;background:#1f1f1f;box-shadow:-3px 0 4px -1px #0a0a0a"></div>
<div class="abs" style="left:873px;top:22px;width:119px;height:42px;background:#2a2a2a"></div><div class="abs" style="left:880.5px;top:25.8px;width:20px;height:1.8px;background:#416c86"></div><div class="abs" style="left:902.5px;top:25.8px;width:55px;height:1.8px;background:#6c4e40"></div><div class="abs" style="left:880.5px;top:27.6px;width:20px;height:1.8px;background:#416c86"></div><div class="abs" style="left:902.5px;top:27.6px;width:86px;height:1.8px;background:#6c4e40"></div><div class="abs" style="left:880.5px;top:29.4px;width:20px;height:1.8px;background:#416c86"></div><div class="abs" style="left:902.5px;top:29.4px;width:51px;height:1.8px;background:#6c4e40"></div><div class="abs" style="left:880.5px;top:31.2px;width:20px;height:1.8px;background:#416c86"></div><div class="abs" style="left:902.5px;top:31.2px;width:86px;height:1.8px;background:#6c4e40"></div><div class="abs" style="left:880.5px;top:33.0px;width:20px;height:1.8px;background:#416c86"></div><div class="abs" style="left:902.5px;top:33.0px;width:86px;height:1.8px;background:#6c4e40"></div><div class="abs" style="left:880.5px;top:34.8px;width:20px;height:1.8px;background:#416c86"></div><div class="abs" style="left:902.5px;top:34.8px;width:86px;height:1.8px;background:#6c4e40"></div><div class="abs" style="left:880.5px;top:36.6px;width:20px;height:1.8px;background:#416c86"></div><div class="abs" style="left:902.5px;top:36.6px;width:86px;height:1.8px;background:#6c4e40"></div><div class="abs" style="left:880.5px;top:38.4px;width:20px;height:1.8px;background:#416c86"></div><div class="abs" style="left:902.5px;top:38.4px;width:86px;height:1.8px;background:#6c4e40"></div><div class="abs" style="left:880.5px;top:40.2px;width:20px;height:1.8px;background:#416c86"></div><div class="abs" style="left:902.5px;top:40.2px;width:86px;height:1.8px;background:#6c4e40"></div><div class="abs" style="left:880.5px;top:42.0px;width:20px;height:1.8px;background:#416c86"></div><div class="abs" style="left:902.5px;top:42.0px;width:35px;height:1.8px;background:#6c4e40"></div><div class="abs" style="left:880.5px;top:43.8px;width:20px;height:1.8px;background:#416c86"></div><div class="abs" style="left:902.5px;top:43.8px;width:86px;height:1.8px;background:#6c4e40"></div><div class="abs" style="left:880.5px;top:45.6px;width:26px;height:1.8px;background:#416c86"></div><div class="abs" style="left:908.5px;top:45.6px;width:35px;height:1.8px;background:#6c4e40"></div><div class="abs" style="left:880.5px;top:47.4px;width:24px;height:1.8px;background:#416c86"></div><div class="abs" style="left:906.5px;top:47.4px;width:82px;height:1.8px;background:#6c4e40"></div><div class="abs" style="left:880.5px;top:49.2px;width:26px;height:1.8px;background:#416c86"></div><div class="abs" style="left:908.5px;top:49.2px;width:9px;height:1.8px;background:#6c4e40"></div><div class="abs" style="left:880.5px;top:51.0px;width:24px;height:1.8px;background:#416c86"></div><div class="abs" style="left:906.5px;top:51.0px;width:82px;height:1.8px;background:#6c4e40"></div><div class="abs" style="left:880.5px;top:52.8px;width:26px;height:1.8px;background:#416c86"></div><div class="abs" style="left:908.5px;top:52.8px;width:23px;height:1.8px;background:#6c4e40"></div><div class="abs" style="left:880.5px;top:54.6px;width:24px;height:1.8px;background:#416c86"></div><div class="abs" style="left:906.5px;top:54.6px;width:82px;height:1.8px;background:#6c4e40"></div><div class="abs" style="left:880.5px;top:56.4px;width:26px;height:1.8px;background:#416c86"></div><div class="abs" style="left:908.5px;top:56.4px;width:19px;height:1.8px;background:#6c4e40"></div><div class="abs" style="left:880.5px;top:58.2px;width:24px;height:1.8px;background:#416c86"></div><div class="abs" style="left:906.5px;top:58.2px;width:82px;height:1.8px;background:#6c4e40"></div>
<div class="abs" style="left:992px;top:22px;width:14px;height:634px;background:#1f1f1f;border-left:1px solid #2b2b2b"></div>
<div class="abs" style="left:992px;top:22px;width:14px;height:634px;background:#4a4a4a;opacity:.75"></div>
<div class="abs" style="left:997px;top:22px;width:4px;height:10px;background:#ddd"></div>
<div class="abs" style="left:994px;top:252px;width:10px;height:3px;background:#aaa"></div><div class="abs" style="left:997px;top:252px;width:4px;height:10px;background:#aaa"></div>
<div class="abs" style="left:66px;top:643px;width:26px;height:12px;background:#4f4f4f"></div>
</div>
<div id="panel" class="abs">
<div class="pt" style="left:20px;">PROBLEMS</div>
<div class="pt" style="left:104px;">OUTPUT</div>
<div class="pt" style="left:175px;">DEBUG CONSOLE</div>
<div class="pt" style="left:294px;color:#e7e7e7;border-bottom:1px solid #0078d4;height:22px;">TERMINAL</div>
<div class="pt" style="left:374px;">PORTS</div>
<div class="badge" style="left:415px;top:9px;font-size:10px">1</div>
<div class="abs" style="left:785px;top:8px;color:#ccc"><svg width="16" height="16" viewBox="0 0 16 16" ><path d="M8 1.2 L13.8 4.5 V11.5 L8 14.8 L2.2 11.5 V4.5 Z" fill="none" stroke="currentColor" stroke-width="1.25" stroke-linecap="round" stroke-linejoin="round" stroke-width="1.3"/><path d="M8 2.5 L12.6 5.2 V10.8 L8 13.5 Z" fill="currentColor"/><path d="M5.2 9.8 L7 6.2" fill="none" stroke="currentColor" stroke-width="1.25" stroke-linecap="round" stroke-linejoin="round" stroke-width="1.4"/></svg></div>
<div class="abs" style="left:806px;top:6px;line-height:20px;font-size:12px;color:#ccc">bash</div>
<div class="abs" style="left:838px;top:8px;color:#ccc"><svg width="16" height="16" viewBox="0 0 16 16" ><path d="M8 2.5 V13.5 M2.5 8 H13.5" fill="none" stroke="currentColor" stroke-width="1.25" stroke-linecap="round" stroke-linejoin="round" stroke-width="1.45"/></svg></div>
<div class="abs" style="left:855px;top:10px;color:#ccc"><svg width="12" height="12" viewBox="0 0 16 16" ><path d="M3.5 6 L8 10.5 L12.5 6" fill="none" stroke="currentColor" stroke-width="1.25" stroke-linecap="round" stroke-linejoin="round" stroke-width="1.4"/></svg></div>
<div class="abs" style="left:876px;top:8px;color:#ccc"><svg width="16" height="16" viewBox="0 0 16 16" ><rect x="2" y="2.5" width="12" height="11" rx="1" fill="none" stroke="currentColor" stroke-width="1.25" stroke-linecap="round" stroke-linejoin="round" stroke-width="1.45"/><path d="M8 2.5 V13.5" fill="none" stroke="currentColor" stroke-width="1.25" stroke-linecap="round" stroke-linejoin="round" stroke-width="1.45"/></svg></div>
<div class="abs" style="left:898px;top:8px;color:#ccc"><svg width="16" height="16" viewBox="0 0 16 16" ><path d="M3 4.5 H13 M6 4.5 V2.5 H10 V4.5 M4.5 4.5 V13.5 H11.5 V4.5 M6.8 7 V11.5 M9.2 7 V11.5" fill="none" stroke="currentColor" stroke-width="1.25" stroke-linecap="round" stroke-linejoin="round" stroke-width="1.45"/></svg></div>
<div class="abs" style="left:923px;top:8px;color:#ccc"><svg width="16" height="16" viewBox="0 0 16 16" ><circle cx="3.5" cy="8" r="1.1" fill="currentColor"/><circle cx="8" cy="8" r="1.1" fill="currentColor"/><circle cx="12.5" cy="8" r="1.1" fill="currentColor"/></svg></div>
<div class="abs" style="left:949px;top:8px;color:#ccc"><svg width="16" height="16" viewBox="0 0 16 16" ><path d="M3.5 10.5 L8 6 L12.5 10.5" fill="none" stroke="currentColor" stroke-width="1.25" stroke-linecap="round" stroke-linejoin="round" stroke-width="1.45"/></svg></div>
<div class="abs" style="left:974px;top:8px;color:#ccc"><svg width="16" height="16" viewBox="0 0 16 16" ><path d="M4 4 L12 12 M12 4 L4 12" fill="none" stroke="currentColor" stroke-width="1.25" stroke-linecap="round" stroke-linejoin="round" stroke-width="1.45"/></svg></div>
<div class="abs" style="left:8px;top:46px;width:8px;height:8px;border:1px solid #8a8a8a;border-radius:50%"></div>
<div class="abs mono" style="left:20px;top:41px;font-size:12px;line-height:18px;white-space:pre;color:#ccc;letter-spacing:-.2px">(3.10.16) <span style="color:#23d18b;font-weight:bold">wyattb@Dakota</span>:<span style="color:#3b8eea;font-weight:bold">~/Dakota</span> <span style="color:#3b8eea;font-weight:bold">$</span> </div>
<div class="abs" style="left:994px;top:50px;width:4px;height:4px;background:#6b6b6b"></div>
</div>
<div id="chat" class="abs">
<div class="abs" style="left:0;top:0;width:298px;height:35px;border-bottom:1px solid #2b2b2b"></div>
<div class="abs" style="left:20px;top:8px;height:21px;line-height:20px;font-size:11px;color:#e7e7e7;border-bottom:1px solid #0078d4;letter-spacing:.2px">CHAT</div>
<div class="abs" style="left:146.3px;top:9px;color:#ccc"><svg width="16" height="16" viewBox="0 0 16 16" ><path d="M4 3 V7 H8 M4.2 7 C6 3.5 12.5 4 12.5 8.5 C12.5 11 10.5 13 7.5 13.5" fill="none" stroke="currentColor" stroke-width="1.25" stroke-linecap="round" stroke-linejoin="round" stroke-width="1.45"/></svg></div>
<div class="abs" style="left:170.8px;top:9px;color:#6b6b6b"><svg width="16" height="16" viewBox="0 0 16 16" ><path d="M12 3 V7 H8 M11.8 7 C10 3.5 3.5 4 3.5 8.5 C3.5 11 5.5 13 8.5 13.5" fill="none" stroke="currentColor" stroke-width="1.25" stroke-linecap="round" stroke-linejoin="round" stroke-width="1.45"/></svg></div>
<div class="abs" style="left:193.2px;top:9px;color:#ccc"><svg width="16" height="16" viewBox="0 0 16 16" ><path d="M8 2.5 V13.5 M2.5 8 H13.5" fill="none" stroke="currentColor" stroke-width="1.25" stroke-linecap="round" stroke-linejoin="round" stroke-width="1.45"/></svg></div>
<div class="abs" style="left:219.3px;top:9px;color:#ccc"><svg width="16" height="16" viewBox="0 0 16 16" ><path d="M1.5 2.5 V6.5 H5.5 M2 6.2 C3.5 3 6.5 1.6 9.6 2.4 C13 3.4 15 6.6 14.3 10 C13.5 13.4 10.2 15.3 7 14.7 C4.2 14.2 2.3 12.2 1.8 9.6 M8.3 5 V8.8 L11 10.6" fill="none" stroke="currentColor" stroke-width="1.25" stroke-linecap="round" stroke-linejoin="round" stroke-width="1.45"/></svg></div>
<div class="abs" style="left:242.7px;top:9px;color:#ccc"><svg width="16" height="16" viewBox="0 0 16 16" ><circle cx="3.5" cy="8" r="1.1" fill="currentColor"/><circle cx="8" cy="8" r="1.1" fill="currentColor"/><circle cx="12.5" cy="8" r="1.1" fill="currentColor"/></svg></div>
<div class="abs" style="left:267.6px;top:9px;color:#ccc"><svg width="16" height="16" viewBox="0 0 16 16" ><path d="M4 4 L12 12 M12 4 L4 12" fill="none" stroke="currentColor" stroke-width="1.25" stroke-linecap="round" stroke-linejoin="round" stroke-width="1.45"/></svg></div>
<div class="abs" style="left:17.6px;top:52.599999999999994px;width:24px;height:24px;border-radius:50%;border:1px solid #3c3c3c;background:#1f1f1f;color:#ccc"><div class="abs" style="left:3px;top:4px"><svg width="16" height="14" viewBox="0 0 18 16" ><path d="M3 7 C3 3.5 6 3 9 3 C12 3 15 3.5 15 7 L16 9.5 V12 C14 13.8 11.5 14.5 9 14.5 C6.5 14.5 4 13.8 2 12 V9.5 Z" fill="none" stroke="currentColor" stroke-width="1.25" stroke-linecap="round" stroke-linejoin="round" stroke-width="1.4"/><path d="M7 9.5 V11.5 M11 9.5 V11.5" fill="none" stroke="currentColor" stroke-width="1.25" stroke-linecap="round" stroke-linejoin="round" stroke-width="1.4"/><path d="M4.5 4.5 H8 V7.5 H4.5 Z M10 4.5 H13.5 V7.5 H10 Z" fill="currentColor" opacity=".7"/></svg></div></div>
<div class="abs" style="left:49.5px;top:54.599999999999994px;line-height:20px;font-weight:bold;color:#ddd;white-space:nowrap;letter-spacing:.1px">GitHub Copilot</div>
<div class="abs" style="left:18.4px;top:88.5px;color:#73c991"><svg width="14" height="14" viewBox="0 0 16 16" ><path d="M3 8.5 L6.5 12 L13 4" fill="none" stroke="currentColor" stroke-width="1.25" stroke-linecap="round" stroke-linejoin="round" stroke-width="1.5"/></svg></div>
<div class="abs" style="left:39.9px;top:85.5px;line-height:20px;color:#8f8f8f;white-space:nowrap;font-size:12.2px;letter-spacing:.2px">Searched axis for "Memory", no results</div>
<div class="cp" style="left:17px;top:111.8px;line-height:20px;">The error indicates that the <code>Memory</code> class</div>
<div class="cp" style="left:17px;top:131.3px;line-height:20px;">cannot be imported from</div>
<div class="cp" style="left:17px;top:151.2px;line-height:20px;"><code>axisapi2.axisapi2</code>. This suggests an</div>
<div class="cp" style="left:17px;top:171.5px;line-height:20px;">issue with the <code>axisapi2</code> module's</div>
<div class="cp" style="left:17px;top:191.2px;line-height:20px;">structure or its <code>__init__.py</code> file. Let's fix</div>
<div class="cp" style="left:17px;top:211.1px;line-height:20px;">this step-by-step:</div>
<div class="cp" style="left:31.2px;top:246.7px;line-height:20px;">1.</div>
<div class="cp" style="left:45.3px;top:246.7px;line-height:20px;"><b>Inspect</b> <code>axisapi2/__init__.py</code>:</div>
<div class="cp" style="left:45.3px;top:267.8px;line-height:20px;">Ensure that the <code>Memory</code> class is</div>
<div class="cp" style="left:45.3px;top:287.7px;line-height:20px;">correctly imported and exposed in the</div>
<div class="cp" style="left:45.3px;top:307.2px;line-height:20px;"><code>__init__.py</code> file.</div>
<div class="cp" style="left:31.2px;top:327.1px;line-height:20px;">2.</div>
<div class="cp" style="left:45.3px;top:327.1px;line-height:20px;"><b>Inspect</b> <code>axisapi2/axisapi2.py</code>:</div>
<div class="cp" style="left:45.3px;top:347.4px;line-height:20px;">Verify that the <code>Memory</code> class is defined</div>
<div class="cp" style="left:45.3px;top:367.5px;line-height:20px;">in <code>axisapi2.py</code> and correctly</div>
<div class="cp" style="left:45.3px;top:387.4px;line-height:20px;">implemented.</div>
<div class="cp" style="left:17px;top:419.5px;line-height:20px;color:#4daafc;"><b>init</b>.py</div>
<div class="cp" style="left:17px;top:447.9px;line-height:20px;">Ensure that the <code>Memory</code> class is correctly</div>
<div class="cp" style="left:17px;top:467.8px;line-height:20px;">imported and exposed in the <code>__init__.py</code></div>
<div class="cp" style="left:17px;top:488.1px;line-height:20px;">file.</div>
<div class="abs" style="left:16.9px;top:515.1px;width:94.1px;height:21.3px;border:1px solid #383838;border-radius:4px;line-height:19.3px;white-space:nowrap;font-size:11px;color:#ccc"><span class="abs" style="left:3px;top:2px"><svg width="16" height="16" viewBox="0 0 16 16" ><path d="M6 2.6 h4 a1.2 1.2 0 0 1 1.2 1.2 v1.4 h1.4 a1.2 1.2 0 0 1 1.2 1.2 v3.2 a1.2 1.2 0 0 1 -1.2 1.2 h-1.4 v1.4 a1.2 1.2 0 0 1 -1.2 1.2 h-4 a1.2 1.2 0 0 1 -1.2 -1.2 v-1.4 h-1.4 a1.2 1.2 0 0 1 -1.2 -1.2 v-3.2 a1.2 1.2 0 0 1 1.2 -1.2 h1.4 v-1.4 a1.2 1.2 0 0 1 1.2 -1.2 z" fill="#4f8fb6"/><circle cx="6.6" cy="4.4" r=".7" fill="#181818"/><circle cx="9.4" cy="11.6" r=".7" fill="#181818"/><path d="M4.8 8.6 H8.2 Q9 8.6 9 7.8 V7.4 H11.2" fill="none" stroke="#1c1c1c" stroke-width=".7"/></svg></span><span class="abs" style="left:22px">__init__.py</span></div>
<div class="cp" style="left:17px;top:552.6px;line-height:20px;color:#4daafc;">axisapi2.py</div>
<div class="cp" style="left:17px;top:580.6px;line-height:20px;">Verify that the <code>Memory</code> class is defined in</div>
<div class="cp" style="left:17px;top:600.5px;line-height:20px;">this file. If it is missing, define it or correct</div>
<div class="cp" style="left:17px;top:620.2px;line-height:20px;">any issues.</div>
<div class="abs" style="left:16.9px;top:648.2px;width:129.9px;height:21.3px;border:1px solid #383838;border-radius:4px;line-height:19.3px;white-space:nowrap;font-size:11px;color:#ccc"><span class="abs" style="left:3px;top:2px"><svg width="16" height="16" viewBox="0 0 16 16" ><path d="M6 2.6 h4 a1.2 1.2 0 0 1 1.2 1.2 v1.4 h1.4 a1.2 1.2 0 0 1 1.2 1.2 v3.2 a1.2 1.2 0 0 1 -1.2 1.2 h-1.4 v1.4 a1.2 1.2 0 0 1 -1.2 1.2 h-4 a1.2 1.2 0 0 1 -1.2 -1.2 v-1.4 h-1.4 a1.2 1.2 0 0 1 -1.2 -1.2 v-3.2 a1.2 1.2 0 0 1 1.2 -1.2 h1.4 v-1.4 a1.2 1.2 0 0 1 1.2 -1.2 z" fill="#4f8fb6"/><circle cx="6.6" cy="4.4" r=".7" fill="#181818"/><circle cx="9.4" cy="11.6" r=".7" fill="#181818"/><path d="M4.8 8.6 H8.2 Q9 8.6 9 7.8 V7.4 H11.2" fill="none" stroke="#1c1c1c" stroke-width=".7"/></svg></span><span class="abs" style="left:22px">axisapi2.py <span style="color:#73c991;margin-left:4px">+22</span> <span style="color:#e2a08d">-0</span></span></div>
<div class="cp" style="left:17px;top:685.9px;line-height:20px;">After making these changes, the <code>Memory</code></div>
<div class="cp" style="left:17px;top:705.3px;line-height:20px;">class should be correctly imported and the</div>
<div class="cp" style="left:17px;top:724.4px;line-height:20px;">error should be resolved.</div>
<div class="abs" style="left:18.5px;top:768.5px;color:#ccc"><svg width="18" height="18" viewBox="0 0 16 16" ><path d="M12.5 3 V6.5 H9 M12.2 6.5 C11 3.5 7.5 2.5 5 4 C2.5 5.5 2 9 3.8 11.3 C5.8 13.8 9.5 13.8 11.5 11.8" fill="none" stroke="currentColor" stroke-width="1.25" stroke-linecap="round" stroke-linejoin="round" stroke-width="1.45"/></svg></div>
<div class="abs" style="left:44.8px;top:768.5px;color:#ccc"><svg width="18" height="18" viewBox="0 0 16 16" ><path d="M2.5 7.5 H5 V13.5 H2.5 Z M5 7.5 L8 2.5 C9.5 2.5 9.8 3.8 9.3 5 L8.8 6.5 H12.5 C13.5 6.5 14 7.3 13.7 8.3 L12.5 12.5 C12.3 13.2 11.8 13.5 11 13.5 H5" fill="none" stroke="currentColor" stroke-width="1.25" stroke-linecap="round" stroke-linejoin="round" stroke-width="1.35"/></svg></div>
<div class="abs" style="left:70.9px;top:768.5px;color:#ccc"><svg width="18" height="18" viewBox="0 0 16 16" ><path d="M2.5 8.5 H5 V2.5 H2.5 Z M5 8.5 L8 13.5 C9.5 13.5 9.8 12.2 9.3 11 L8.8 9.5 H12.5 C13.5 9.5 14 8.7 13.7 7.7 L12.5 3.5 C12.3 2.8 11.8 2.5 11 2.5 H5" fill="none" stroke="currentColor" stroke-width="1.25" stroke-linecap="round" stroke-linejoin="round" stroke-width="1.35"/></svg></div>
<div class="abs" style="left:17.1px;top:808.4px;width:265.3px;height:192.1px;border:1px solid #333;border-radius:5px;background:#1f1f1f;overflow:hidden">
<div class="abs" style="left:11.9px;top:5.800000000000001px;line-height:20px;font-size:11.5px;color:#bbb">2 files changed</div>
<div class="abs" style="left:210.4px;top:6.7px;width:41.9px;height:17.2px;background:#0078d4;color:#fff;border-radius:2px;font-size:11px;font-weight:bold;text-align:center;line-height:17.2px">Done</div>
<div class="abs" style="left:12.600000000000001px;top:30.6px"><svg width="16" height="16" viewBox="0 0 16 16" ><path d="M6 2.6 h4 a1.2 1.2 0 0 1 1.2 1.2 v1.4 h1.4 a1.2 1.2 0 0 1 1.2 1.2 v3.2 a1.2 1.2 0 0 1 -1.2 1.2 h-1.4 v1.4 a1.2 1.2 0 0 1 -1.2 1.2 h-4 a1.2 1.2 0 0 1 -1.2 -1.2 v-1.4 h-1.4 a1.2 1.2 0 0 1 -1.2 -1.2 v-3.2 a1.2 1.2 0 0 1 1.2 -1.2 h1.4 v-1.4 a1.2 1.2 0 0 1 1.2 -1.2 z" fill="#4f8fb6"/><circle cx="6.6" cy="4.4" r=".7" fill="#181818"/><circle cx="9.4" cy="11.6" r=".7" fill="#181818"/><path d="M4.8 8.6 H8.2 Q9 8.6 9 7.8 V7.4 H11.2" fill="none" stroke="#1c1c1c" stroke-width=".7"/></svg></div>
<div class="abs" style="left:33.2px;top:28.6px;line-height:20px;color:#ddd;white-space:nowrap">__init__.py <span style="font-size:11.5px;color:#9a9a9a;margin-left:3px">axis/axisapi2</span></div>
<div class="abs" style="left:12.600000000000001px;top:51.3px"><svg width="16" height="16" viewBox="0 0 16 16" ><path d="M6 2.6 h4 a1.2 1.2 0 0 1 1.2 1.2 v1.4 h1.4 a1.2 1.2 0 0 1 1.2 1.2 v3.2 a1.2 1.2 0 0 1 -1.2 1.2 h-1.4 v1.4 a1.2 1.2 0 0 1 -1.2 1.2 h-4 a1.2 1.2 0 0 1 -1.2 -1.2 v-1.4 h-1.4 a1.2 1.2 0 0 1 -1.2 -1.2 v-3.2 a1.2 1.2 0 0 1 1.2 -1.2 h1.4 v-1.4 a1.2 1.2 0 0 1 1.2 -1.2 z" fill="#4f8fb6"/><circle cx="6.6" cy="4.4" r=".7" fill="#181818"/><circle cx="9.4" cy="11.6" r=".7" fill="#181818"/><path d="M4.8 8.6 H8.2 Q9 8.6 9 7.8 V7.4 H11.2" fill="none" stroke="#1c1c1c" stroke-width=".7"/></svg></div>
<div class="abs" style="left:33.2px;top:49.3px;line-height:20px;color:#ddd;white-space:nowrap">axisapi2.py <span style="font-size:11.5px;color:#9a9a9a;margin-left:3px">axis/axisapi2</span></div>
<div class="abs" style="left:0;top:75.3px;width:265.3px;height:192.1px;background:#303030;border-top:1px dotted #444"></div>
<div class="abs" style="left:6.1px;top:84.0px;width:105.7px;height:18.2px;border:1px solid #444;border-radius:4px;line-height:16.2px;white-space:nowrap;font-size:11px;color:#ccc"><span class="abs" style="left:5px;top:1px;color:#ccc"><svg width="14" height="14" viewBox="0 0 16 16" ><path d="M5 6 V10.5 C5 14.5 11 14.5 11 10.5 V4.5 C11 1.8 7 1.8 7 4.5 V10.5 C7 11.8 9 11.8 9 10.5 V6" fill="none" stroke="currentColor" stroke-width="1.25" stroke-linecap="round" stroke-linejoin="round" stroke-width="1.35"/></svg></span><span class="abs" style="left:25px">Add Context...</span></div>
<div class="abs" style="left:6.1px;top:108.0px;width:184.0px;height:18.0px;border:1px solid #444;border-radius:4px;line-height:16.0px;white-space:nowrap;font-size:11px;color:#ccc"><span class="abs" style="left:5px;top:-1px;width:16px;height:18px"><span style="position:absolute;left:0;top:-3px;font-size:12px;font-weight:bold;color:#cbcb41;letter-spacing:1px;line-height:22px">{}</span></span><span class="abs" style="left:24px;letter-spacing:.2px"><span style="font-size:11.5px;color:#ddd">chatmem.json</span> <span style="color:#aaa;font-size:10px">Current file</span></span><span class="abs" style="right:6px;top:1px;color:#ccc"><svg width="14" height="14" viewBox="0 0 16 16" ><path d="M1.5 9 C4 3.5 12 3.5 14.5 9" fill="none" stroke="currentColor" stroke-width="1.25" stroke-linecap="round" stroke-linejoin="round" stroke-width="1.45"/><circle cx="8" cy="9" r="2.2" fill="none" stroke="currentColor" stroke-width="1.25" stroke-linecap="round" stroke-linejoin="round" stroke-width="1.45"/></svg></span></div>
<div class="abs" style="left:6.1px;top:135.3px;line-height:20px;color:#8a8a8a;white-space:nowrap">Edit files in your workspace</div>
<div class="abs" style="left:8.399999999999999px;top:165.7px;color:#ccc"><svg width="16" height="16" viewBox="0 0 16 16" ><rect x="6" y="1.5" width="4" height="8" rx="2" fill="none" stroke="currentColor" stroke-width="1.25" stroke-linecap="round" stroke-linejoin="round" stroke-width="1.45"/><path d="M3.8 7.5 C3.8 13 12.2 13 12.2 7.5 M8 11.8 V14.5" fill="none" stroke="currentColor" stroke-width="1.25" stroke-linecap="round" stroke-linejoin="round" stroke-width="1.45"/></svg></div>
<div class="abs" style="left:110.5px;top:163.7px;line-height:20px;font-size:11px;color:#ccc;white-space:nowrap">Edit <span style="display:inline-block;vertical-align:-1px"><svg width="10" height="10" viewBox="0 0 16 16" ><path d="M3 5.5 L8 10.5 L13 5.5" fill="none" stroke="currentColor" stroke-width="1.25" stroke-linecap="round" stroke-linejoin="round" stroke-width="1.8"/></svg></span></div>
<div class="abs" style="left:159.7px;top:163.7px;line-height:20px;font-size:11px;color:#ccc;white-space:nowrap">GPT-4o <span style="display:inline-block;vertical-align:-1px"><svg width="10" height="10" viewBox="0 0 16 16" ><path d="M3 5.5 L8 10.5 L13 5.5" fill="none" stroke="currentColor" stroke-width="1.25" stroke-linecap="round" stroke-linejoin="round" stroke-width="1.8"/></svg></span></div>
<div class="abs" style="left:225.2px;top:165.7px;color:#6a6a6a"><svg width="16" height="16" viewBox="0 0 16 16" ><path d="M2.5 2.5 L14 8 L2.5 13.5 V9 L8 8 L2.5 7 Z" fill="none" stroke="currentColor" stroke-width="1.25" stroke-linecap="round" stroke-linejoin="round" stroke-width="1.35"/></svg></div>
<div class="abs" style="left:244.8px;top:168.7px;color:#6a6a6a"><svg width="10" height="10" viewBox="0 0 16 16" ><path d="M3 5.5 L8 10.5 L13 5.5" fill="none" stroke="currentColor" stroke-width="1.25" stroke-linecap="round" stroke-linejoin="round" stroke-width="1.8"/></svg></div>
</div>
</div>
<div id="status" class="abs">
<div class="si" style="left:0;top:-1px;width:207.2px;height:22px;background:#0078d4;color:#fff;line-height:22px"><span class="abs" style="left:9px;top:4px"><svg width="14" height="14" viewBox="0 0 16 16" ><path d="M3 2.5 L7 6.5 L3 10.5 M13 5.5 L9 9.5 L13 13.5" fill="none" stroke="currentColor" stroke-width="1.25" stroke-linecap="round" stroke-linejoin="round" stroke-width="1.5"/></svg></span><span class="abs" style="left:28px">SSH: dakota.tailb6415c.ts.net</span></div>
<div class="si" style="left:215.5px"><span class="abs" style="left:0;top:4px"><svg width="14" height="14" viewBox="0 0 16 16" ><circle cx="8" cy="8" r="6" fill="none" stroke="currentColor" stroke-width="1.25" stroke-linecap="round" stroke-linejoin="round" stroke-width="1.45"/><path d="M5.8 5.8 L10.2 10.2 M10.2 5.8 L5.8 10.2" fill="none" stroke="currentColor" stroke-width="1.25" stroke-linecap="round" stroke-linejoin="round" stroke-width="1.45"/></svg></span><span class="abs" style="left:17px">0</span><span class="abs" style="left:28px;top:4px"><svg width="14" height="14" viewBox="0 0 16 16" ><path d="M8 2 L14.5 13.5 H1.5 Z M8 6.5 V10 M8 11.5 V12" fill="none" stroke="currentColor" stroke-width="1.25" stroke-linecap="round" stroke-linejoin="round" stroke-width="1.45"/></svg></span><span class="abs" style="left:45px">0</span></div>
<div class="si" style="left:286.0px"><span class="abs" style="left:0;top:4px"><svg width="14" height="14" viewBox="0 0 16 16" ><path d="M8 14 V7 M8 7 L4 3 M8 7 L12 3 M2.5 5.5 C1.5 8 2.5 10 4 11 M13.5 5.5 C14.5 8 13.5 10 12 11" fill="none" stroke="currentColor" stroke-width="1.25" stroke-linecap="round" stroke-linejoin="round" stroke-width="1.45"/></svg></span><span class="abs" style="left:18px">1</span></div>
<div class="si" style="left:1351.2px">Ln 21, Col 2</div>
<div class="si" style="left:1437.7px">Spaces: 4</div>
<div class="si" style="left:1509.8px">UTF-8</div>
<div class="si" style="left:1562.4px">LF</div>
<div class="si" style="left:1591.6px"><span style="letter-spacing:2px">{}</span>&nbsp; JSON</div>
<div class="si" style="left:1655.8px;top:3px;color:#ccc"><svg width="18" height="16" viewBox="0 0 18 16" ><path d="M3 7 C3 3.5 6 3 9 3 C12 3 15 3.5 15 7 L16 9.5 V12 C14 13.8 11.5 14.5 9 14.5 C6.5 14.5 4 13.8 2 12 V9.5 Z" fill="none" stroke="currentColor" stroke-width="1.25" stroke-linecap="round" stroke-linejoin="round" stroke-width="1.5"/><path d="M7 9.5 V11.5 M11 9.5 V11.5" fill="none" stroke="currentColor" stroke-width="1.25" stroke-linecap="round" stroke-linejoin="round" stroke-width="1.5"/></svg></div>
<div class="si" style="left:1685.2px;top:3px;color:#ccc"><svg width="16" height="16" viewBox="0 0 16 16" ><path d="M8 2 C5 2 4 4.5 4 7 V10 L2.5 12 H13.5 L12 10 V7 C12 4.5 11 2 8 2 Z M6.8 13.8 C7.2 14.8 8.8 14.8 9.2 13.8" fill="none" stroke="currentColor" stroke-width="1.25" stroke-linecap="round" stroke-linejoin="round" stroke-width="1.45"/></svg></div>
</div>
</div></div></body></html>
